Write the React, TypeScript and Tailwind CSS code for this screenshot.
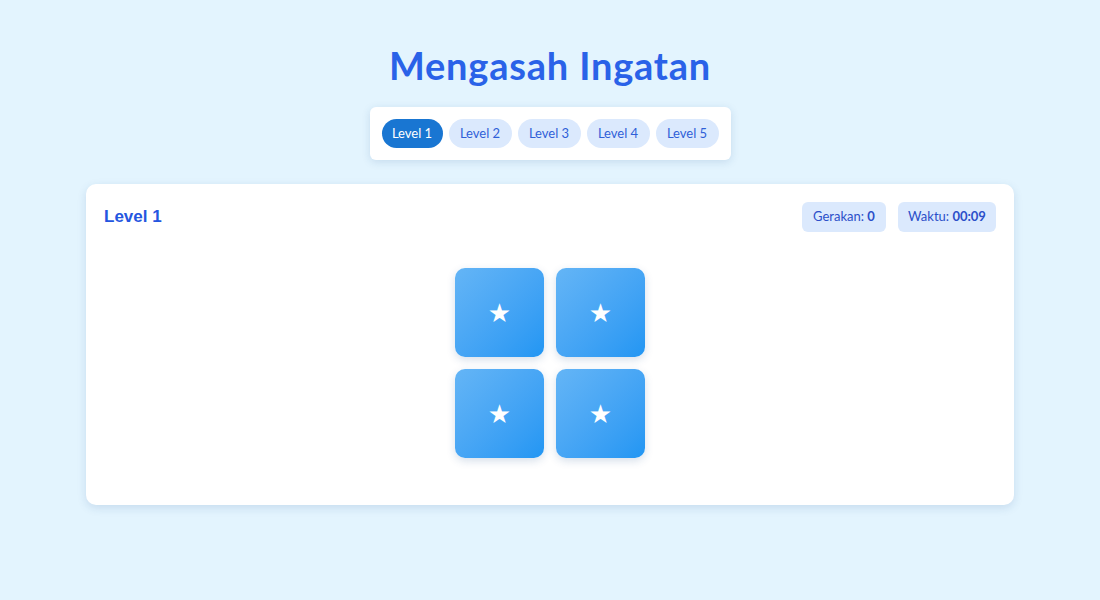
import React from 'react';

const levels = ['Level 1', 'Level 2', 'Level 3', 'Level 4', 'Level 5'];

const App: React.FC = () => {
  const active = 0;

  return (
    <div className="min-h-[600px] w-full bg-[#e3f4fe] font-['Lato','Noto_Sans',sans-serif]">
      <div className="flex flex-col items-center pt-[43px]">
        {/* Title */}
        <h1 className="text-[38px] leading-[45px] font-bold text-[#2a62e8] tracking-[0.8px]">
          Mengasah Ingatan
        </h1>

        {/* Level tabs */}
        <div className="mt-[19px] flex gap-[6px] rounded-[6px] bg-white p-[12px] shadow-[0_2px_8px_rgba(30,80,140,0.15)]">
          {levels.map((lvl, i) => (
            <button
              key={lvl}
              className={
                i === active
                  ? 'h-[29px] w-[61px] rounded-full bg-[#1976d2] text-[13px] text-white'
                  : 'h-[29px] w-[63px] rounded-full bg-[#dbe9fd] text-[13px] text-[#2f5fd8]'
              }
            >
              {lvl}
            </button>
          ))}
        </div>

        {/* Game card */}
        <div className="mt-[24px] w-[928px] rounded-[10px] bg-white px-[18px] pt-[18px] pb-[47px] shadow-[0_3px_10px_rgba(30,80,140,0.14)]">
          <div className="flex items-center justify-between">
            <h2 className="font-['Liberation_Sans',Arial,sans-serif] text-[17px] font-bold text-[#2456e0]">
              Level 1
            </h2>
            <div className="flex gap-[12px]">
              <div className="flex h-[30px] w-[84px] items-center justify-center rounded-[6px] bg-[#dbe9fd] text-[13px] text-[#2b4fc9]">
                Gerakan:&nbsp;<span className="font-bold">0</span>
              </div>
              <div className="flex h-[30px] w-[98px] items-center justify-center rounded-[6px] bg-[#dbe9fd] text-[13px] text-[#2b4fc9]">
                Waktu:&nbsp;<span className="font-bold">00:09</span>
              </div>
            </div>
          </div>

          <div className="mt-[36px] flex justify-center">
            <div className="grid grid-cols-[89px_89px] gap-[12px]">
              {[0, 1, 2, 3].map((n) => (
                <div
                  key={n}
                  className="flex h-[89px] w-[89px] items-center justify-center rounded-[10px] bg-gradient-to-br from-[#64b5f6] to-[#2196f3] shadow-[0_3px_8px_rgba(30,80,140,0.18)]"
                >
                  <span className="font-['DejaVu_Sans',sans-serif] text-[26px] leading-none text-white">★</span>
                </div>
              ))}
            </div>
          </div>
        </div>
      </div>
    </div>
  );
};

export default App;
